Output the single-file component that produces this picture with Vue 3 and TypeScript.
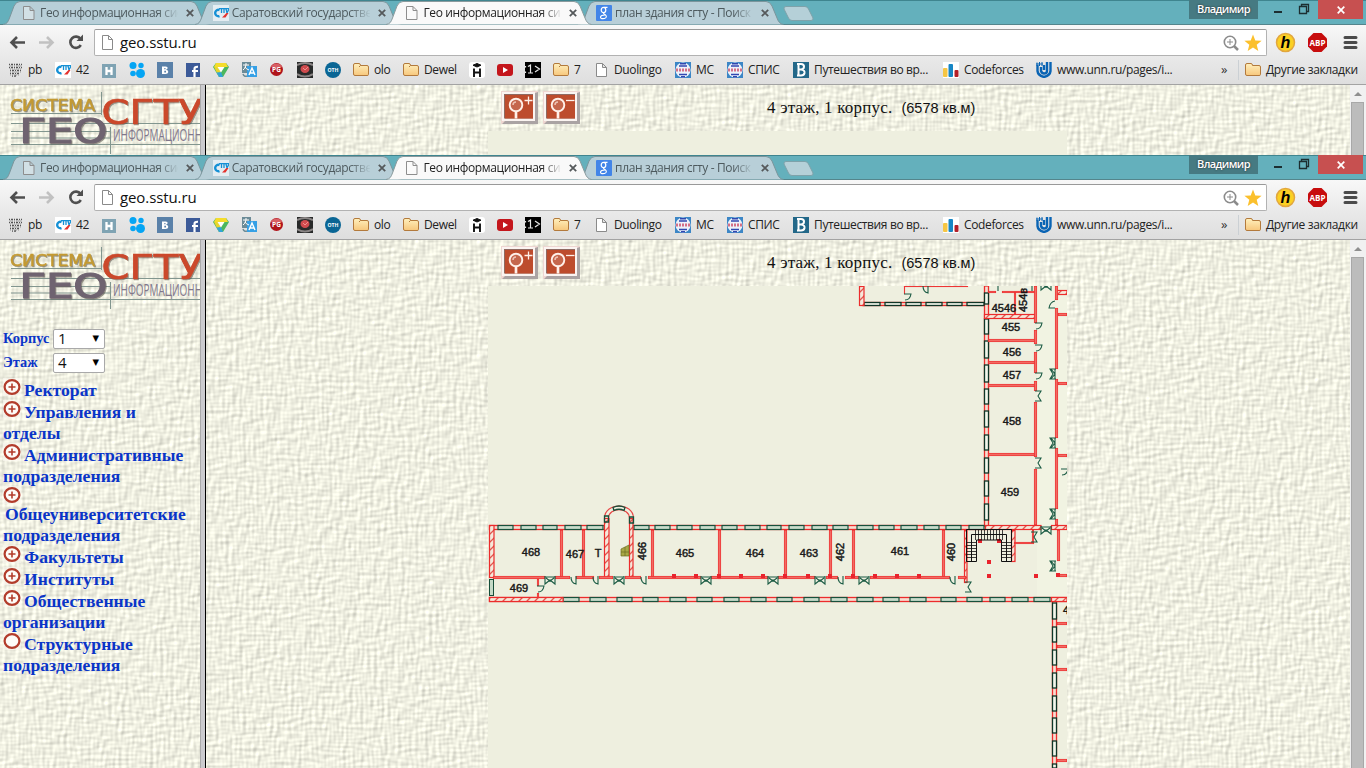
<script setup lang="ts">
interface Bookmark { icon: string; text: string; width: number }
interface Tab { icon: string; title: string; active?: boolean }

const windows = [{ id: 'back', full: false }, { id: 'front', full: true }]

const tabs: Tab[] = [
  { icon: 'page', title: 'Гео информационная сис' },
  { icon: 'sstu', title: 'Саратовский государстве' },
  { icon: 'page', title: 'Гео информационная сис', active: true },
  { icon: 'google', title: 'план здания сгту - Поиск' },
]
const backTabs = [0, 1, 3]

const bookmarks: Bookmark[] = [
  { icon: 'pb', text: 'pb', width: 48 },
  { icon: 'sstu', text: '42', width: 46 },
  { icon: 'h', text: '', width: 28 },
  { icon: 'dots', text: '', width: 28 },
  { icon: 'vk', text: '', width: 28 },
  { icon: 'fb', text: '', width: 28 },
  { icon: 'tri', text: '', width: 28 },
  { icon: 'translate', text: '', width: 28 },
  { icon: 'pg', text: '', width: 28 },
  { icon: 'dark', text: '', width: 28 },
  { icon: 'oth', text: '', width: 28 },
  { icon: 'folder', text: 'olo', width: 50 },
  { icon: 'folder', text: 'Dewel', width: 66 },
  { icon: 'hat', text: '', width: 28 },
  { icon: 'yt', text: '', width: 28 },
  { icon: 'one', text: '', width: 28 },
  { icon: 'folder', text: '7', width: 40 },
  { icon: 'page', text: 'Duolingo', width: 82 },
  { icon: 'stamp', text: 'МС', width: 52 },
  { icon: 'stamp', text: 'СПИС', width: 66 },
  { icon: 'b', text: 'Путешествия во вр...', width: 150 },
  { icon: 'cf', text: 'Codeforces', width: 93 },
  { icon: 'unn', text: 'www.unn.ru/pages/i...', width: 150 },
]

const menu = [
  { kind: 'plus', text: 'Ректорат' },
  { kind: 'plus', text: 'Управления и' },
  { kind: 'text', text: 'отделы' },
  { kind: 'plus', text: 'Административные' },
  { kind: 'text', text: 'подразделения' },
  { kind: 'alone', text: '' },
  { kind: 'indent', text: 'Общеуниверситетские' },
  { kind: 'text', text: 'подразделения' },
  { kind: 'plus', text: 'Факультеты' },
  { kind: 'plus', text: 'Институты' },
  { kind: 'plus', text: 'Общественные' },
  { kind: 'text', text: 'организации' },
  { kind: 'empty', text: 'Структурные' },
  { kind: 'text', text: 'подразделения' },
]

// Window openings of the long facades, as [start, end]
const topWin = [[498, 513], [521, 536], [543, 557], [565, 581], [587, 603], [634, 649], [655, 670], [677, 692], [700, 715], [722, 737], [745, 760], [767, 781], [789, 804], [812, 827], [833, 848], [857, 873], [879, 894], [901, 917], [924, 939], [946, 961], [969, 984]]
const botWin = [[563, 579], [590, 606], [617, 632], [643, 658], [670, 686], [697, 712], [724, 739], [751, 766], [777, 792], [804, 819], [831, 847], [857, 873], [883, 899], [910, 926], [941, 956], [967, 982], [990, 1005], [1012, 1028], [1034, 1050]]
const northWin = [[864, 880], [885, 901], [906, 921], [926, 942], [947, 962], [967, 984]]
const eastWin = [[293, 304], [319, 334], [341, 358], [365, 382], [389, 404], [411, 427], [435, 450], [458, 473], [481, 496], [504, 520]]
const southWin = [[603, 619], [627, 642], [650, 665], [673, 688], [696, 711], [718, 733], [741, 756], [764, 768]]

// Thin partition walls: x, y, width, height
const walls = [
  [560, 530, 3, 47], [582, 530, 3, 47], [651, 530, 3, 47], [718, 530, 3, 49], [784, 530, 3, 47], [829, 530, 3, 47], [852, 530, 3, 47], [942, 530, 3, 47],
  [493, 576, 52, 3], [555, 576, 15, 3], [576, 576, 18, 3], [599, 576, 14, 3], [625, 576, 16, 3], [648, 576, 53, 3], [711, 576, 57, 3], [778, 576, 37, 3], [826, 576, 12, 3], [845, 576, 14, 3], [870, 576, 80, 3], [958, 576, 8, 3],
  [537, 579, 2, 7], [537, 593, 2, 5],
  [904, 286, 64, 1], [904, 286, 1, 8],
  [988, 291, 8, 2], [1002, 291, 33, 2], [1014, 292, 2, 22], [988, 339, 48, 3], [988, 361, 48, 3], [988, 384, 48, 3], [988, 453, 48, 3],
  [1034, 286, 3, 37], [1034, 330, 3, 14], [1034, 352, 3, 21], [1034, 381, 3, 10], [1034, 402, 3, 55], [1034, 469, 3, 56],
  [1055, 286, 3, 14], [1055, 308, 3, 61], [1055, 379, 3, 59], [1055, 448, 3, 61], [1055, 519, 3, 6],
  [1058, 313, 9, 3], [1058, 382, 9, 3], [1058, 454, 9, 3],
  [1014, 542, 20, 2], [1032, 530, 2, 13], [1057, 530, 3, 31], [1057, 574, 10, 3],
  [1057, 622, 10, 3], [1057, 645, 10, 3], [1057, 668, 10, 3], [1057, 759, 10, 3],
]
// Load-bearing walls with hatching
const hatched = [
  [489, 525, 5, 52], [489, 597, 74, 4], [604, 518, 5, 59], [629, 518, 4, 59], [964, 530, 3, 52], [985, 525, 56, 4], [1051, 525, 16, 4],
  [1011, 530, 4, 31], [859, 286, 5, 19], [984, 314, 51, 4], [1056, 290, 11, 4], [1051, 597, 16, 4],
]
const squares = [[674, 576], [696, 576], [719, 576], [741, 576], [763, 576], [785, 576], [808, 576], [830, 576], [853, 576], [875, 576], [897, 576], [919, 576], [989, 562], [989, 576], [1036, 576], [1058, 575], [980, 541], [999, 541]]
// Double doors, horizontal openings
const doubleH = [[550, 578], [619, 578], [706, 578], [773, 578], [820, 578], [864, 578], [1046, 528], [1046, 284]]
const doubleL = [[1053, 369], [1053, 438], [1053, 509], [1053, 561]]
const doubleR = [[1036, 391], [1036, 458], [966, 582], [1032, 532]]
const singleDown = [[571, 577], [593, 577], [641, 577], [838, 577], [950, 577], [923, 286]]
const singleRight = [[538, 586], [1036, 323], [1036, 345], [1036, 373], [905, 294], [1062, 469]]
const rooms = [
  ['468', 531, 556], ['467', 575, 558], ['T', 598, 557], ['465', 685, 557], ['464', 755, 557], ['463', 809, 557], ['461', 900, 555], ['469', 519, 592],
  ['4546', 1004, 312], ['455', 1011, 331], ['456', 1012, 356], ['457', 1012, 379], ['458', 1012, 425], ['459', 1010, 496],
] as [string, number, number][]
const turned = [['466', 646, 551], ['462', 844, 552], ['460', 955, 552], ['454в', 1027, 300]] as [string, number, number][]
</script>

<template>
  <svg class="defs" width="0" height="0">
    <defs>
      <filter id="paper" x="0" y="0" width="100%" height="100%" color-interpolation-filters="sRGB">
        <feTurbulence type="fractalNoise" baseFrequency="0.08 0.29" numOctaves="1" seed="4" result="a" />
        <feTurbulence type="fractalNoise" baseFrequency="0.29 0.08" numOctaves="1" seed="9" result="b" />
        <feComposite in="a" in2="b" operator="arithmetic" k2="0.5" k3="0.5" result="c" />
        <feDiffuseLighting in="c" surfaceScale="0.7" diffuseConstant="1.34" lighting-color="#f0f0e2">
          <feDistantLight azimuth="225" elevation="48" />
        </feDiffuseLighting>
      </filter>
      <linearGradient id="folderFill" x2="0" y2="1"><stop stop-color="#fff0bd" /><stop offset="1" stop-color="#f7c77c" /></linearGradient>
      <pattern id="hatch" width="8" height="8" patternUnits="userSpaceOnUse"><path d="M-1 9L9 -1M-1 1L1 -1M7 9L9 7" stroke="#e2564e" stroke-width="1.300" /></pattern>
    </defs>
  </svg>
  <div class="screen">
    <section v-for="w in windows" :key="w.id" class="window" :class="w.id">
      <header class="strip">
        <div v-for="(t, i) in tabs" :key="i" class="tab" :class="{ active: t.active }">
          <svg class="shape" width="206" height="25" viewBox="0 0 206 25">
            <path d="M0 24.5C4 24 5 22 6.500 18L11 6Q13 1.500 17 1.500H188Q192 1.500 194 6L199 18Q201 24 205.500 24.500" />
          </svg>
          <svg class="ico" width="16" height="16" viewBox="0 0 16 16">
            <path v-if="t.icon === 'page'" d="M2.500 1.500H9L13 5.500V14.500H2.500ZM9 1.500V5.500H13" fill="#fafafa" stroke="#8d8d8d" :fill-opacity="backTabs.includes(i) ? 0.4 : 1" />
            <g v-else-if="t.icon === 'sstu'"><path fill="#e4edf2" d="M0 0H16V16H0Z" /><path d="M6.500 5A3.200 3.200 0 1 0 6.500 11" fill="none" stroke="#1590d5" stroke-width="2.400" /><path d="M6 3.700H16M8.500 4V8M11 4V8M13 4L14 8L16 4" stroke="#1590d5" stroke-width="1.300" fill="none" /><path d="M9 12.500L13.500 8H15.500L12.500 12.500Z" fill="#e5322d" /></g>
            <g v-else><rect width="16" height="16" rx="1" fill="#4285e8" /><ellipse cx="7.500" cy="5" rx="2.300" ry="2.600" fill="none" stroke="#fff" stroke-width="1.200" /><path d="M8 2.400H11.500M9 7.500Q6 8.500 9 9.500Q12 12 8.500 13.500Q4 14 4.500 12Q5 10 9 10" fill="none" stroke="#fff" stroke-width="1.100" /></g>
          </svg>
          <span class="title">{{ t.title }}</span>
          <svg class="x" width="8" height="8" viewBox="0 0 8 8"><path d="M.8.800L7.200 7.200M7.200.800L.8 7.200" /></svg>
        </div>
        <svg class="newtab" width="32" height="16" viewBox="0 0 32 16"><path d="M3 .5H22Q24.500.500 25.500 3L30 12Q30.500 14.500 28 14.500H9Q6.500 14.500 5.500 12L1 3Q.5.500 3 .5Z" fill="#b5d0d8" stroke="#7ea2aa" /></svg>
        <div class="caption">
          <span class="user">Владимир</span>
          <svg width="60" height="19" viewBox="0 0 60 19"><path d="M16 12H24" stroke="#1c2e31" stroke-width="2" /><path d="M41.500 6.500H48.500V13.500H41.500ZM43.500 6V4.500H50.500V11.500H49" fill="none" stroke="#1c2e31" stroke-width="1.300" /></svg>
          <span class="close"><svg width="8" height="8" viewBox="0 0 8 8"><path d="M.7.700L7.300 7.300M7.300.700L.7 7.300" stroke="#fff" stroke-width="1.700" /></svg></span>
        </div>
      </header>

      <div class="toolbar">
        <svg class="nav" width="94" height="32" viewBox="0 0 94 32">
          <path d="M25 17.500H12M17 12L11.500 17.500L17 23" fill="none" stroke="#4f4f4f" stroke-width="2.600" />
          <path d="M39 17.500H52M47 12L52.500 17.500L47 23" fill="none" stroke="#c1c1c1" stroke-width="2.600" />
          <path d="M80.500 14A5.600 5.600 0 1 0 80.800 20" fill="none" stroke="#4f4f4f" stroke-width="2.600" /><path d="M83 9.500V16H76.500Z" fill="#4f4f4f" />
        </svg>
        <div class="omnibox">
          <svg width="16" height="16" viewBox="0 0 16 16"><path d="M3.500.500H9.500L13.500 4.500V14.500H3.500ZM9.500.500V4.500H13.500" fill="#fff" stroke="#8a8a8a" /></svg>
          <span class="url">geo.sstu.ru</span>
          <svg width="16" height="16" viewBox="0 0 16 16"><circle cx="7" cy="7" r="5.700" fill="none" stroke="#8b8b8b" stroke-width="1.600" /><path d="M7 4V10M4 7H10" stroke="#8b8b8b" /><path d="M11 11L15 15" stroke="#8b8b8b" stroke-width="2.500" /></svg>
          <svg class="star" width="18" height="18" viewBox="0 0 18 18"><path d="M9 .5L11.300 6.500L17.600 6.800L12.700 10.800L14.300 17L9 13.500L3.700 17L5.300 10.800L.4 6.800L6.700 6.500Z" fill="#fbc02d" /></svg>
        </div>
        <svg class="ext" width="99" height="32" viewBox="0 0 99 32">
          <circle cx="18.500" cy="17.500" r="9" fill="#fbd023" stroke="#e2a73e" stroke-width="1.500" /><text x="18.500" y="23" text-anchor="middle" font-family="Liberation Sans, sans-serif" font-size="16" font-weight="bold" font-style="italic">h</text>
          <path d="M46.500 8H54.500L60 13.500V21.500L54.500 27H46.500L41 21.500V13.500Z" fill="#c70d0d" /><text x="50.500" y="21" text-anchor="middle" textLength="16" lengthAdjust="spacingAndGlyphs" font-family="Open Sans, sans-serif" font-size="9" font-weight="bold" fill="#fff">ABP</text>
          <path d="M78 12.500H89M78 17.500H89M78 22.500H89" stroke="#4b4b4b" stroke-width="3" stroke-linecap="round" />
        </svg>
      </div>

      <div class="bookmarks">
        <div v-for="(b, i) in bookmarks" :key="i" class="bm" :style="{ width: b.width + 'px' }">
          <svg width="16" height="16" viewBox="0 0 16 16">
            <g v-if="b.icon === 'pb'"><path d="M2 2.500H15M2 5.500H15M3 8.500H14M3 11.500H13M5 14H10" stroke="#555" stroke-width="1.700" stroke-dasharray="1 1 2 1" /><path d="M3 4H14M3 7H14M3 10H15M3 13H12" stroke="#999" stroke-dasharray="1 1" /></g>
            <g v-else-if="b.icon === 'sstu'"><path fill="#fff" d="M0 0H16V16H0Z" /><path d="M6.500 5A3.200 3.200 0 1 0 6.500 11" fill="none" stroke="#1590d5" stroke-width="2.400" /><path d="M6 3.700H16M8.500 4V8M11 4V8M13 4L14 8L16 4" stroke="#1590d5" stroke-width="1.300" fill="none" /><path d="M9 12.500L13.500 8H15.500L12.500 12.500Z" fill="#e5322d" /></g>
            <g v-else-if="b.icon === 'h'"><path d="M1 2H15V16H1Z" fill="#7fa3b3" /><path d="M5.500 5V13M10.500 5V13M5.500 9H10.500" stroke="#fff" stroke-width="2.300" /></g>
            <g v-else-if="b.icon === 'dots'" fill="#05a5f4"><circle cx="4" cy="3.500" r="3.500" /><circle cx="12" cy="3.500" r="2.700" /><circle cx="4" cy="11.500" r="2.800" /><circle cx="11.500" cy="11.500" r="4.500" /></g>
            <g v-else-if="b.icon === 'vk'"><rect width="16" height="16" fill="#5a81a9" /><path d="M5 4.500H8.500Q11 4.500 10.500 6.500Q10 7.500 9 7.700Q11.500 8.200 11.300 10Q11 12 8.500 12H5ZM7.300 6V7.300H8.500V6ZM7.300 8.800V10.500H9V8.800Z" fill="#fff" fill-rule="evenodd" /></g>
            <g v-else-if="b.icon === 'fb'"><path d="M1 1H15V15H1Z" fill="#3c5a98" /><path d="M9.500 15V7Q9.500 4.500 13 4.800M7 9H13" fill="none" stroke="#fff" stroke-width="2.200" /></g>
            <g v-else-if="b.icon === 'tri'"><path d="M3 1H13L16 5L10 15H6L0 5Z" fill="#4cb75d" /><path d="M3 1H13L15 5H1Z" fill="#f5dc2b" /><path d="M1 5H5L8 10L6 15Z" fill="#e8d52c" /><path d="M8 10L10 15H6L3.500 10.500Z" fill="#31a4d7" /><path d="M4.500 5H11.500L8 10.500Z" fill="#fff" /></g>
            <g v-else-if="b.icon === 'translate'"><rect x="1" width="9" height="11" fill="#6c8b97" /><rect x="6" y="4" width="10" height="11" fill="#36a0e5" /><path d="M2 3H8M5 1V3Q4 7 2 8M4 5Q5 7 8 8" stroke="#fff" fill="none" /><path d="M8 13L11 6L14 13M9 11H13" stroke="#fff" stroke-width="1.400" fill="none" /><path d="M2 12Q3 15 6 14" stroke="#6c8b97" fill="none" stroke-width="1.500" /></g>
            <g v-else-if="b.icon === 'pg'"><circle cx="7.500" cy="7.500" r="6.500" fill="#b0141b" /><path d="M1.700 5A6.500 6.500 0 0 1 13.300 5Q8 7 1.700 5Z" fill="#d85f65" /><text x="7.500" y="10" text-anchor="middle" font-family="Open Sans, sans-serif" font-size="6.500" font-weight="bold" fill="#fff">PG</text></g>
            <g v-else-if="b.icon === 'dark'"><path fill="#282a2a" d="M0 0H16V16H0Z" /><path d="M0 3Q8-1 16 3M0 12Q8 17 16 12" stroke="#8a8585" fill="none" stroke-width="2" /><ellipse cx="8" cy="7" rx="4.500" ry="4" fill="#cf4b4e" /><path d="M6 6L8 8L11 5" stroke="#f08f8c" fill="none" /></g>
            <g v-else-if="b.icon === 'oth'"><circle cx="8" cy="8" r="8" fill="#0a6695" /><text x="8" y="10.200" text-anchor="middle" textLength="11" lengthAdjust="spacingAndGlyphs" font-family="Open Sans, sans-serif" font-size="6" font-weight="bold" fill="#fff">ОТН</text></g>
            <path v-else-if="b.icon === 'folder'" d="M.5 4V3Q.5 1.500 2 1.500H6Q7.500 1.500 7.500 3.500H14Q15.500 3.500 15.500 5V12.500Q15.500 13.500 14 13.500H2Q.5 13.500.500 12ZM7.500 3.500L6 5" fill="url(#folderFill)" stroke="#b37a3c" />
            <g v-else-if="b.icon === 'hat'"><rect width="16" height="16" rx="3" fill="#fff" /><path d="M5 6.500V15M11 6.500V15M5 10.500H11" stroke="#111" stroke-width="1.900" /><path d="M4 3.200L8 1.500L12 3.200L8 5Z" fill="#111" stroke="#111" /></g>
            <g v-else-if="b.icon === 'yt'"><rect y="2" width="16" height="12" rx="3" fill="#c4161c" /><path d="M6 5V11L11 8Z" fill="#fff" /></g>
            <g v-else-if="b.icon === 'one'"><path d="M0 0H16V16H0Z" /><path d="M.5 4V5.500M.5 9.500V11M3 4.500L5.500 3V11M3 11H8M10 4L14.500 7L10 10" fill="none" stroke="#e8e8e8" stroke-width="1.200" /></g>
            <path v-else-if="b.icon === 'page'" d="M3.500 1.500H9.500L13.500 5.500V14.500H3.500ZM9.500 1.500V5.500H13.500" fill="#fff" stroke="#8a8a8a" />
            <g v-else-if="b.icon === 'stamp'"><path fill="#3c86c6" d="M0 0H16V16H0Z" /><circle cx="8" cy="8" r="7.500" fill="#edf2fa" /><path d="M4 4H12M4 12.500H12M5 1.800H11M6 14.800H10" stroke="#3147b0" stroke-width="1.400" /><path d="M1 8H15" stroke="#cf4f6b" stroke-width="3" stroke-dasharray="2 1" opacity=".8" /></g>
            <g v-else-if="b.icon === 'b'"><path fill="#236889" d="M0 0H16V16H0Z" /><path d="M5.500 1.500V13.500M4 2H8Q11 2 11 4.500Q11 7.500 8 7.500Q12 8 11.500 11Q11 13.500 8 13.500H4M6 7.500H9" fill="none" stroke="#fff" stroke-width="2" /></g>
            <g v-else-if="b.icon === 'cf'"><path fill="#fff" d="M0 0H16V16H0Z" /><rect y="6" width="4.500" height="9" rx="1" fill="#f6c644" /><rect x="5.500" y="2" width="4.500" height="13" rx="1" fill="#1686c5" /><rect x="11.500" y="8" width="4" height="7" rx="1" fill="#b21f29" /></g>
            <g v-else fill="none" stroke="#0a64b4"><path d="M1.500 3V9Q2 13.500 8 15Q14 13.500 14.500 9V0" stroke-width="2.400" /><path d="M5 5V9Q6 11.500 8 11.500Q11 11.500 11 9V0M8 3V8" stroke-width="2.400" /><path d="M0 2H7M1 .5V4M3.500 0V4M6 0V4" stroke-width="1" /></g>
          </svg>
          <span v-if="b.text" class="label">{{ b.text }}</span>
        </div>
        <span class="more">»</span>
        <div class="other">
          <svg width="16" height="16" viewBox="0 0 16 16"><path d="M.5 4V3Q.5 1.500 2 1.500H6Q7.500 1.500 7.500 3.500H14Q15.500 3.500 15.500 5V12.500Q15.500 13.500 14 13.500H2Q.5 13.500.500 12Z" fill="url(#folderFill)" stroke="#b37a3c" /></svg>
          <span class="label">Другие закладки</span>
        </div>
      </div>

      <main class="page">
        <svg class="paper" width="1350" height="528"><rect width="1350" height="528" filter="url(#paper)" /></svg>
        <aside class="side">
          <svg class="logo" width="200" height="75" viewBox="0 240 200 75">
            <path d="M11 268.500H101M11 278.500H200M11 286.500H110M11 293H110M11 299.500H200M101.500 247V270M110.500 282V309" stroke="#82968f" stroke-width="1.100" />
            <g class="raised" font-family="DejaVu Sans, sans-serif">
              <text x="10" y="266" font-size="15.500" textLength="85" lengthAdjust="spacingAndGlyphs" fill="#c49a32" stroke="#c49a32" stroke-width=".5">СИСТЕМА</text>
              <text x="19.500" y="298" font-size="33" textLength="88" lengthAdjust="spacingAndGlyphs" fill="#6f6370" stroke="#6f6370" stroke-width="1.200">ГЕО</text>
              <text x="101.500" y="279" font-size="34" textLength="101" lengthAdjust="spacingAndGlyphs" fill="#cb482b" stroke="#cb482b" stroke-width=".7">СГТУ</text>
            </g>
            <text x="113" y="296" font-family="Open Sans, sans-serif" font-size="15.500" textLength="89" lengthAdjust="spacingAndGlyphs" fill="#81778b">ИНФОРМАЦИОНН</text>
          </svg>
          <template v-if="w.full">
            <div class="field"><b>Корпус</b><span class="select">1<i>▼</i></span></div>
            <div class="field"><b>Этаж</b><span class="select">4<i>▼</i></span></div>
            <nav class="menu">
              <div v-for="(m, i) in menu" :key="i" class="row" :class="m.kind">
                <svg v-if="m.kind === 'plus' || m.kind === 'alone' || m.kind === 'empty'" width="18" height="18" viewBox="0 0 18 18"><rect width="18" height="18" fill="#fbf8f2" opacity=".6" /><ellipse cx="9" cy="9" rx="7.400" ry="6.900" fill="#fdfbf7" stroke="#b23c2b" stroke-width="2.200" /><path v-if="m.kind !== 'empty'" d="M9 5.500V12.500M5.500 9H12.500" stroke="#b23c2b" stroke-width="1.600" /></svg>
                <span>{{ m.text }}</span>
              </div>
            </nav>
          </template>
        </aside>
        <div class="divider"></div>
        <div class="content">
          <div class="head">
            <svg v-for="k in 2" :key="k" class="zoom" width="37" height="33" viewBox="0 0 37 33">
              <path d="M0 0H37V33H0Z" fill="#eed6d1" /><path d="M37 1V33H1L4 30H34V2Z" fill="#aaa3a3" /><path d="M1 1H34V30H1Z" fill="#fbf4f1" /><path d="M3 3H32V27.500H3Z" fill="#8e6a62" /><path d="M4 4H32V27.500H4Z" fill="#bd4c2d" />
              <circle cx="15" cy="14" r="6.300" fill="#c5674d" stroke="#fff0e9" stroke-width="1.900" /><path d="M15 20.500V27.500" stroke="#fff0e9" stroke-width="2.700" /><path d="M12 14Q12 11 15 11" stroke="#eec3b4" fill="none" stroke-width="1.500" />
              <path :d="k === 1 ? 'M23.500 9.500H31.500M27.500 5.500V13.500' : 'M23 9.500H31.500'" stroke="#fff0e9" stroke-width="1.300" />
            </svg>
            <div class="floor"><span>4 этаж, 1 корпус.</span><em>(6578 кв.м)</em></div>
          </div>
          <div class="map">
            <svg v-if="w.full" width="579" height="482" viewBox="488 286 579 482">
              <rect x="1037" y="286" width="30" height="311" fill="#f1f3e2" />
              <g fill="#f7ddd0" stroke="#ec2c2c" stroke-width="1.300"><rect x="489.500" y="525.500" width="496" height="4" /><rect x="489.500" y="597.500" width="577" height="4" /><rect x="862.500" y="302.500" width="122" height="3" /><rect x="984.500" y="286" width="4" height="240" /><rect x="1052.500" y="601" width="4" height="168" /></g>
              <g fill="#c9dccb" stroke="#17513c" stroke-width="1.200">
                <rect v-for="s in topWin" :key="'t' + s[0]" :x="s[0]" y="525.500" :width="s[1] - s[0]" height="4" />
                <rect v-for="s in botWin" :key="'b' + s[0]" :x="s[0]" y="597.500" :width="s[1] - s[0]" height="4" />
              </g>
              <g fill="#f3f6ec" stroke="#0f3526" stroke-width="1.300">
                <rect v-for="s in northWin" :key="'n' + s[0]" :x="s[0]" y="302.500" :width="s[1] - s[0]" height="3" />
                <rect v-for="s in eastWin" :key="'e' + s[0]" x="984.500" :y="s[0]" width="4" :height="s[1] - s[0]" />
                <rect v-for="s in southWin" :key="'s' + s[0]" x="1052.500" :y="s[0]" width="4" :height="s[1] - s[0]" />
              </g>
              <rect x="604" y="518" width="29" height="59" fill="#eeefdf" />
              <g v-for="(r, i) in hatched" :key="'h' + i"><rect :x="r[0] + 0.5" :y="r[1] + 0.5" :width="r[2] - 0.5" :height="r[3]" fill="#f5e8db" /><rect :x="r[0] + 0.5" :y="r[1] + 0.5" :width="r[2] - 0.5" :height="r[3]" fill="url(#hatch)" stroke="#ec2c2c" stroke-width="1.200" /></g>
              <rect x="489.500" y="579.500" width="4" height="16" fill="#c5dac7" stroke="#164e39" />
              <path d="M604.500 518C605 502 633 502 633.500 518M608.500 518C609 507 629 507 629.500 518" fill="none" stroke="#e84545" stroke-width="1.100" />
              <path d="M613 507.500Q619 504.500 625 507.500L624 510.500Q619 508 614 510.500ZM604.500 516V522H608.500V516ZM629.500 517V523H633.500V517Z" fill="none" stroke="#164e39" stroke-width="1.300" />
              <g fill="#f26b64" stroke="#ee3535" stroke-width=".9"><rect v-for="(r, i) in walls" :key="'w' + i" :x="r[0] + 0.400" :y="r[1] + 0.400" :width="r[2] - 0.800" :height="r[3] - 0.800" /></g>
              <rect v-for="(s, i) in squares" :key="'q' + i" :x="s[0] - 2" :y="s[1] - 2" width="4" height="4" fill="#e9232d" />
              <g fill="none" stroke="#1b5b44" stroke-width="1.100">
                <path v-for="(d, i) in doubleH" :key="'dh' + i" :d="`M${d[0] - 5} ${d[1] - 2}V${d[1] + 6}L${d[0]} ${d[1] + 2}L${d[0] + 5} ${d[1] + 6}V${d[1] - 2}M${d[0] - 5} ${d[1] - 1}H${d[0] + 5}M${d[0] - 4} ${d[1]}L${d[0]} ${d[1] + 3}L${d[0] + 4} ${d[1]}`" />
                <path v-for="(d, i) in doubleL" :key="'dl' + i" :d="`M${d[0] + 3} ${d[1]}H${d[0] - 3}L${d[0]} ${d[1] + 5}L${d[0] - 3} ${d[1] + 10}H${d[0] + 3}M${d[0] + 2} ${d[1]}V${d[1] + 10}M${d[0] - 2} ${d[1]}L${d[0] + 2} ${d[1] + 5}L${d[0] - 2} ${d[1] + 10}`" />
                <path v-for="(d, i) in doubleR" :key="'dr' + i" :d="`M${d[0] - 1} ${d[1]}H${d[0] + 5}L${d[0] + 2} ${d[1] + 5}L${d[0] + 5} ${d[1] + 10}H${d[0] - 1}`" />
                <path v-for="(d, i) in singleDown" :key="'sd' + i" :d="`M${d[0]} ${d[1]}Q${d[0]} ${d[1] + 6} ${d[0] + 5} ${d[1] + 7}V${d[1] - 1}`" />
                <path v-for="(d, i) in singleRight" :key="'sr' + i" :d="`M${d[0] - 1} ${d[1]}H${d[0] + 6}Q${d[0] + 5} ${d[1] + 6} ${d[0]} ${d[1] + 6}`" />
                <path d="M1055 308H1049Q1050 302 1055 301M998 286V291M1032 286V291" />
              </g>
              <path d="M621 549L629 545V556H621ZM621 552H629M625 547V556" fill="#a8a846" stroke="#6d6d22" stroke-width=".7" />
              <g fill="none" stroke="#111">
                <path d="M966.500 529.500H1011.500V561.500H1001.500V540H976.500V561.500H966.500ZM971.500 561V534.500H1006.500V561" />
                <path d="M975.500 530V540M978.500 530V540M981.500 530V540M984.500 530V540M987.500 530V540M990.500 530V540M993.500 530V540M996.500 530V540M999.500 530V540M1002.500 530V540M966 542.500H977M966 545.500H977M966 548.500H977M966 551.500H977M966 554.500H977M966 557.500H977M1001 542.500H1012M1001 545.500H1012M1001 548.500H1012M1001 551.500H1012M1001 554.500H1012M1001 557.500H1012" stroke-width=".8" />
              </g>
              <g class="room"><text v-for="r in rooms" :key="r[0]" :x="r[1]" :y="r[2]">{{ r[0] }}</text><text v-for="r in turned" :key="r[0]" :transform="`translate(${r[1]} ${r[2]}) rotate(-90)`">{{ r[0] }}</text><text x="1066" y="614">4</text></g>
            </svg>
          </div>
        </div>
        <div class="scroll"><svg width="16" height="17" viewBox="0 0 16 17"><path d="M4 11L8 7L12 11Z" fill="#8f8f8f" /></svg><div class="thumb"></div></div>
      </main>
    </section>
  </div>
</template>

<style>
html, body { margin: 0; overflow: hidden; }
</style>
<style scoped>
.defs { position: absolute; }
.screen { width: 1366px; height: 768px; overflow: hidden; font-family: "Open Sans", sans-serif; }
.window { display: flex; flex-direction: column; overflow: hidden; }
.window.back { height: 155px; }
.window.front { height: 613px; }
svg { display: block; flex: none; }
.strip { height: 25px; flex: none; box-sizing: border-box; border-top: 1px solid #3f858f; background: linear-gradient(#64b0bc 23px, #54858c 23px); display: flex; padding-left: 3px; }
.tab { width: 205.700px; margin-right: -14px; height: 25px; margin-top: -1px; position: relative; display: flex; align-items: center; flex: none; box-sizing: border-box; padding-left: 18px; }
.shape { position: absolute; left: 0; top: 0; }
.shape path { fill: #b8cfd8; stroke: #7b959c; }
.tab.active { z-index: 2; }
.tab.active .shape path { fill: #f9f9f9; stroke: #8a9a9d; }
.ico, .title, .x { position: relative; }
.title { margin-left: 3px; width: 138px; height: 20px; line-height: 20px; overflow: hidden; white-space: nowrap; font-size: 12px; letter-spacing: -0.36px; color: #4d5a5e; -webkit-mask-image: linear-gradient(90deg, #000 118px, transparent 139px); mask-image: linear-gradient(90deg, #000 118px, transparent 139px); }
.active .title { color: #222; }
.x { margin-left: 8px; stroke: #55595b; stroke-width: 1.800; }
.newtab { margin: 5px 0 0 13px; }
.caption { margin-left: auto; display: flex; height: 19px; margin-top: -1px; padding-right: 3px; }
.user { width: 69px; background: #467a82; color: #fff; font-size: 11px; font-weight: 600; letter-spacing: -0.6px; line-height: 18px; text-align: center; text-shadow: 0 0 2px #222; }
.close { width: 45px; background: #c75050; display: flex; align-items: center; justify-content: center; }
.toolbar { height: 32px; flex: none; display: flex; background: linear-gradient(#f8f8f8, #e9e9e9); }
.omnibox { flex: 1; height: 27px; box-sizing: border-box; margin-top: 4px; border: 1px solid #b2b2b2; border-top-color: #999; border-radius: 2px; background: #fff; display: flex; align-items: center; padding: 0 4px; }
.url { flex: 1; margin-left: 5px; font-size: 15px; line-height: 22px; color: #111; letter-spacing: -0.1px; margin-top: -2px; }
.star { margin-left: 5px; }
.bookmarks { height: 28px; flex: none; box-sizing: border-box; border-bottom: 1px solid #a3a3a3; background: linear-gradient(#e9e9e9, #dedede); display: flex; align-items: center; padding-left: 7px; padding-bottom: 2px; }
.bm, .other { display: flex; align-items: center; flex: none; height: 26px; }
.label { margin-left: 5px; font-size: 12px; letter-spacing: -0.36px; color: #222; white-space: nowrap; }
.more { margin-left: 35px; width: 17px; font-size: 13px; line-height: 18px; margin-top: -2px; color: #333; }
.other { border-left: 1px solid #cbd0d4; height: 20px; padding-left: 6px; }
.page { flex: 1; min-height: 0; display: flex; position: relative; overflow: hidden; }
.paper { position: absolute; left: 0; top: 0; }
.side { width: 200px; flex: none; overflow: hidden; position: relative; }
.raised { filter: drop-shadow(1px 1px 0 rgba(80, 75, 65, 0.55)); }
.field { display: flex; height: 20px; margin: 0 0 4px 3px; align-items: center; position: relative; top: 14px; font-family: "Liberation Serif", serif; font-size: 14.400px; color: #0a35c8; }
.field b { width: 50px; margin-top: -2px; }
.select { width: 52px; height: 20px; box-sizing: border-box; border: 1px solid #a9a9a9; border-radius: 2px; background: #fff; color: #111; display: flex; align-items: center; justify-content: space-between; padding: 0 5px 2px 4px; font: 15px/16px "Open Sans", sans-serif; }
.select i { font: 8.500px "DejaVu Sans", sans-serif; color: #000; }
.menu { margin: 19px 0 0 3px; font: bold 17.600px/22px "Liberation Serif", serif; letter-spacing: 0.04px; color: #0a35c8; }
.row { height: 21px; line-height: 21px; display: flex; white-space: nowrap; }
.row.plus, .row.empty { height: 22px; }
.row.plus span, .row.empty span { margin: 2px 0 0 3px; }
.row.text span { position: relative; top: 1px; }
.row.alone { height: 17px; }
.row.indent { padding-left: 2px; }
.row.indent span { position: relative; top: 1px; }
.divider { flex: none; background: #cbcbce; border-left: 1px solid #aaa; border-right: 1px solid #000; box-sizing: border-box; width: 6px; position: relative; }
.content { width: 1144px; flex: none; position: relative; }
.head { height: 46px; display: flex; padding-left: 295px; box-sizing: border-box; }
.zoom { margin: 6px 5px 0 0; }
.floor { margin: 13px 0 0 182px; white-space: nowrap; font: 17px/20px "Liberation Serif", serif; letter-spacing: 0.2px; color: #111; }
.floor em { font: 14.500px "Liberation Sans", sans-serif; letter-spacing: 0; margin-left: 9px; }
.map { width: 579px; height: 482px; margin-left: 282px; background: #eeefdf; }
.room { font: 11px "Liberation Sans", sans-serif; fill: #191919; stroke: #191919; stroke-width: 0.45px; text-anchor: middle; }
.scroll { flex: 1; background: #f1f1f1; position: relative; }
.thumb { height: 700px; margin: 0 2px 0 1px; background: #bcbcbc; border: 1px solid #a8a8a8; box-sizing: border-box; }
</style>
